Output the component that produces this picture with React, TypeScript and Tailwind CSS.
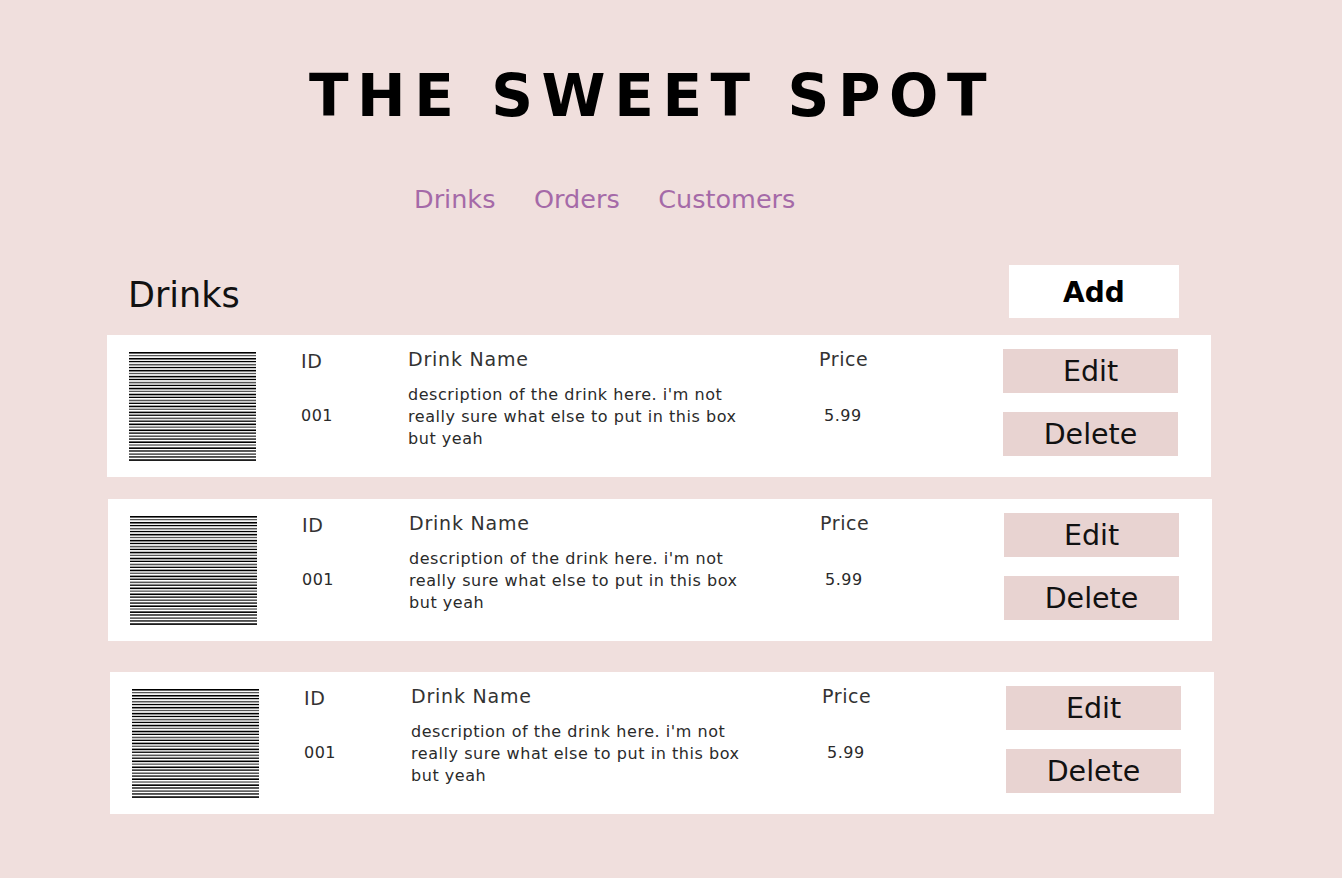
import React from 'react';

const drinks = [
  { id: '001', name: 'Drink Name', price: '5.99', offset: 'ml-[107px]', gap: 'mt-[17px]' },
  { id: '001', name: 'Drink Name', price: '5.99', offset: 'ml-[108px]', gap: 'mt-[22px]' },
  { id: '001', name: 'Drink Name', price: '5.99', offset: 'ml-[110px]', gap: 'mt-[31px]' },
];

function Stripes() {
  const rows = Array.from({ length: 37 });
  return (
    <svg width="127" height="110" viewBox="0 0 127 110" className="block">
      {rows.map((_, i) => (
        <rect key={i} x="0" y={i * 2.98} width="127" height={i % 2 === 0 ? 1.6 : 1.3} fill={i % 3 === 1 ? '#555' : '#000'} />
      ))}
    </svg>
  );
}

export default function App() {
  return (
    <div className="min-h-screen bg-[#f0dfdd] font-['DejaVu_Sans',sans-serif] pb-[60px]">
      <h1 className="pt-[67px] pr-[38px] text-center text-[58px] leading-none font-bold tracking-[8.6px] text-black">
        THE SWEET SPOT
      </h1>

      <nav className="mt-[62px] flex gap-[38.5px] pl-[414px] text-[25.5px] leading-none text-[#a56aa8]">
        <span>Drinks</span>
        <span>Orders</span>
        <span>Customers</span>
      </nav>

      <div className="mt-[52.5px] ml-[107px] flex w-[1104px] items-start justify-between">
        <h2 className="mt-[13px] pl-[21px] text-[35px] leading-none text-[#111]">Drinks</h2>
        <button className="mr-[32px] flex h-[53px] w-[170px] items-center justify-center bg-white pt-[3px] text-[28px] font-bold text-black">
          Add
        </button>
      </div>

      {drinks.map((d, i) => (
        <div key={i} className={`${d.offset} ${d.gap} flex h-[142px] w-[1104px] items-start bg-white text-[#2a2a2a]`}>
          <div className="mt-[17px] ml-[22px] shrink-0">
            <Stripes />
          </div>

          <div className="mt-[16px] ml-[45px] flex w-[107px] flex-col">
            <span className="mt-[1px] text-[19px] leading-none tracking-[0.6px] text-[#333]">ID</span>
            <span className="mt-[37px] text-[16px] leading-none tracking-[0.5px]">{d.id}</span>
          </div>

          <div className="mt-[15px] flex w-[411px] flex-col">
            <span className="text-[19px] leading-none tracking-[0.8px] text-[#333]">{d.name}</span>
            <p className="mt-[15px] w-[345px] text-[16px] leading-[22px] tracking-[0.55px]">
              description of the drink here. i'm not really sure what else to put in this box but yeah
            </p>
          </div>

          <div className="mt-[15px] flex flex-col">
            <span className="text-[19px] leading-none tracking-[0.6px] text-[#333]">Price</span>
            <span className="mt-[39px] pl-[5px] text-[16px] leading-none tracking-[0.5px]">{d.price}</span>
          </div>

          <div className="mt-[14px] mr-[33px] ml-auto flex flex-col gap-[19px]">
            <button className="flex h-[44px] w-[175px] items-center justify-center bg-[#e8d3d1] pt-[3px] text-[28.5px] text-[#111]">
              Edit
            </button>
            <button className="flex h-[44px] w-[175px] items-center justify-center bg-[#e8d3d1] pt-[3px] text-[28.5px] text-[#111]">
              Delete
            </button>
          </div>
        </div>
      ))}
    </div>
  );
}
